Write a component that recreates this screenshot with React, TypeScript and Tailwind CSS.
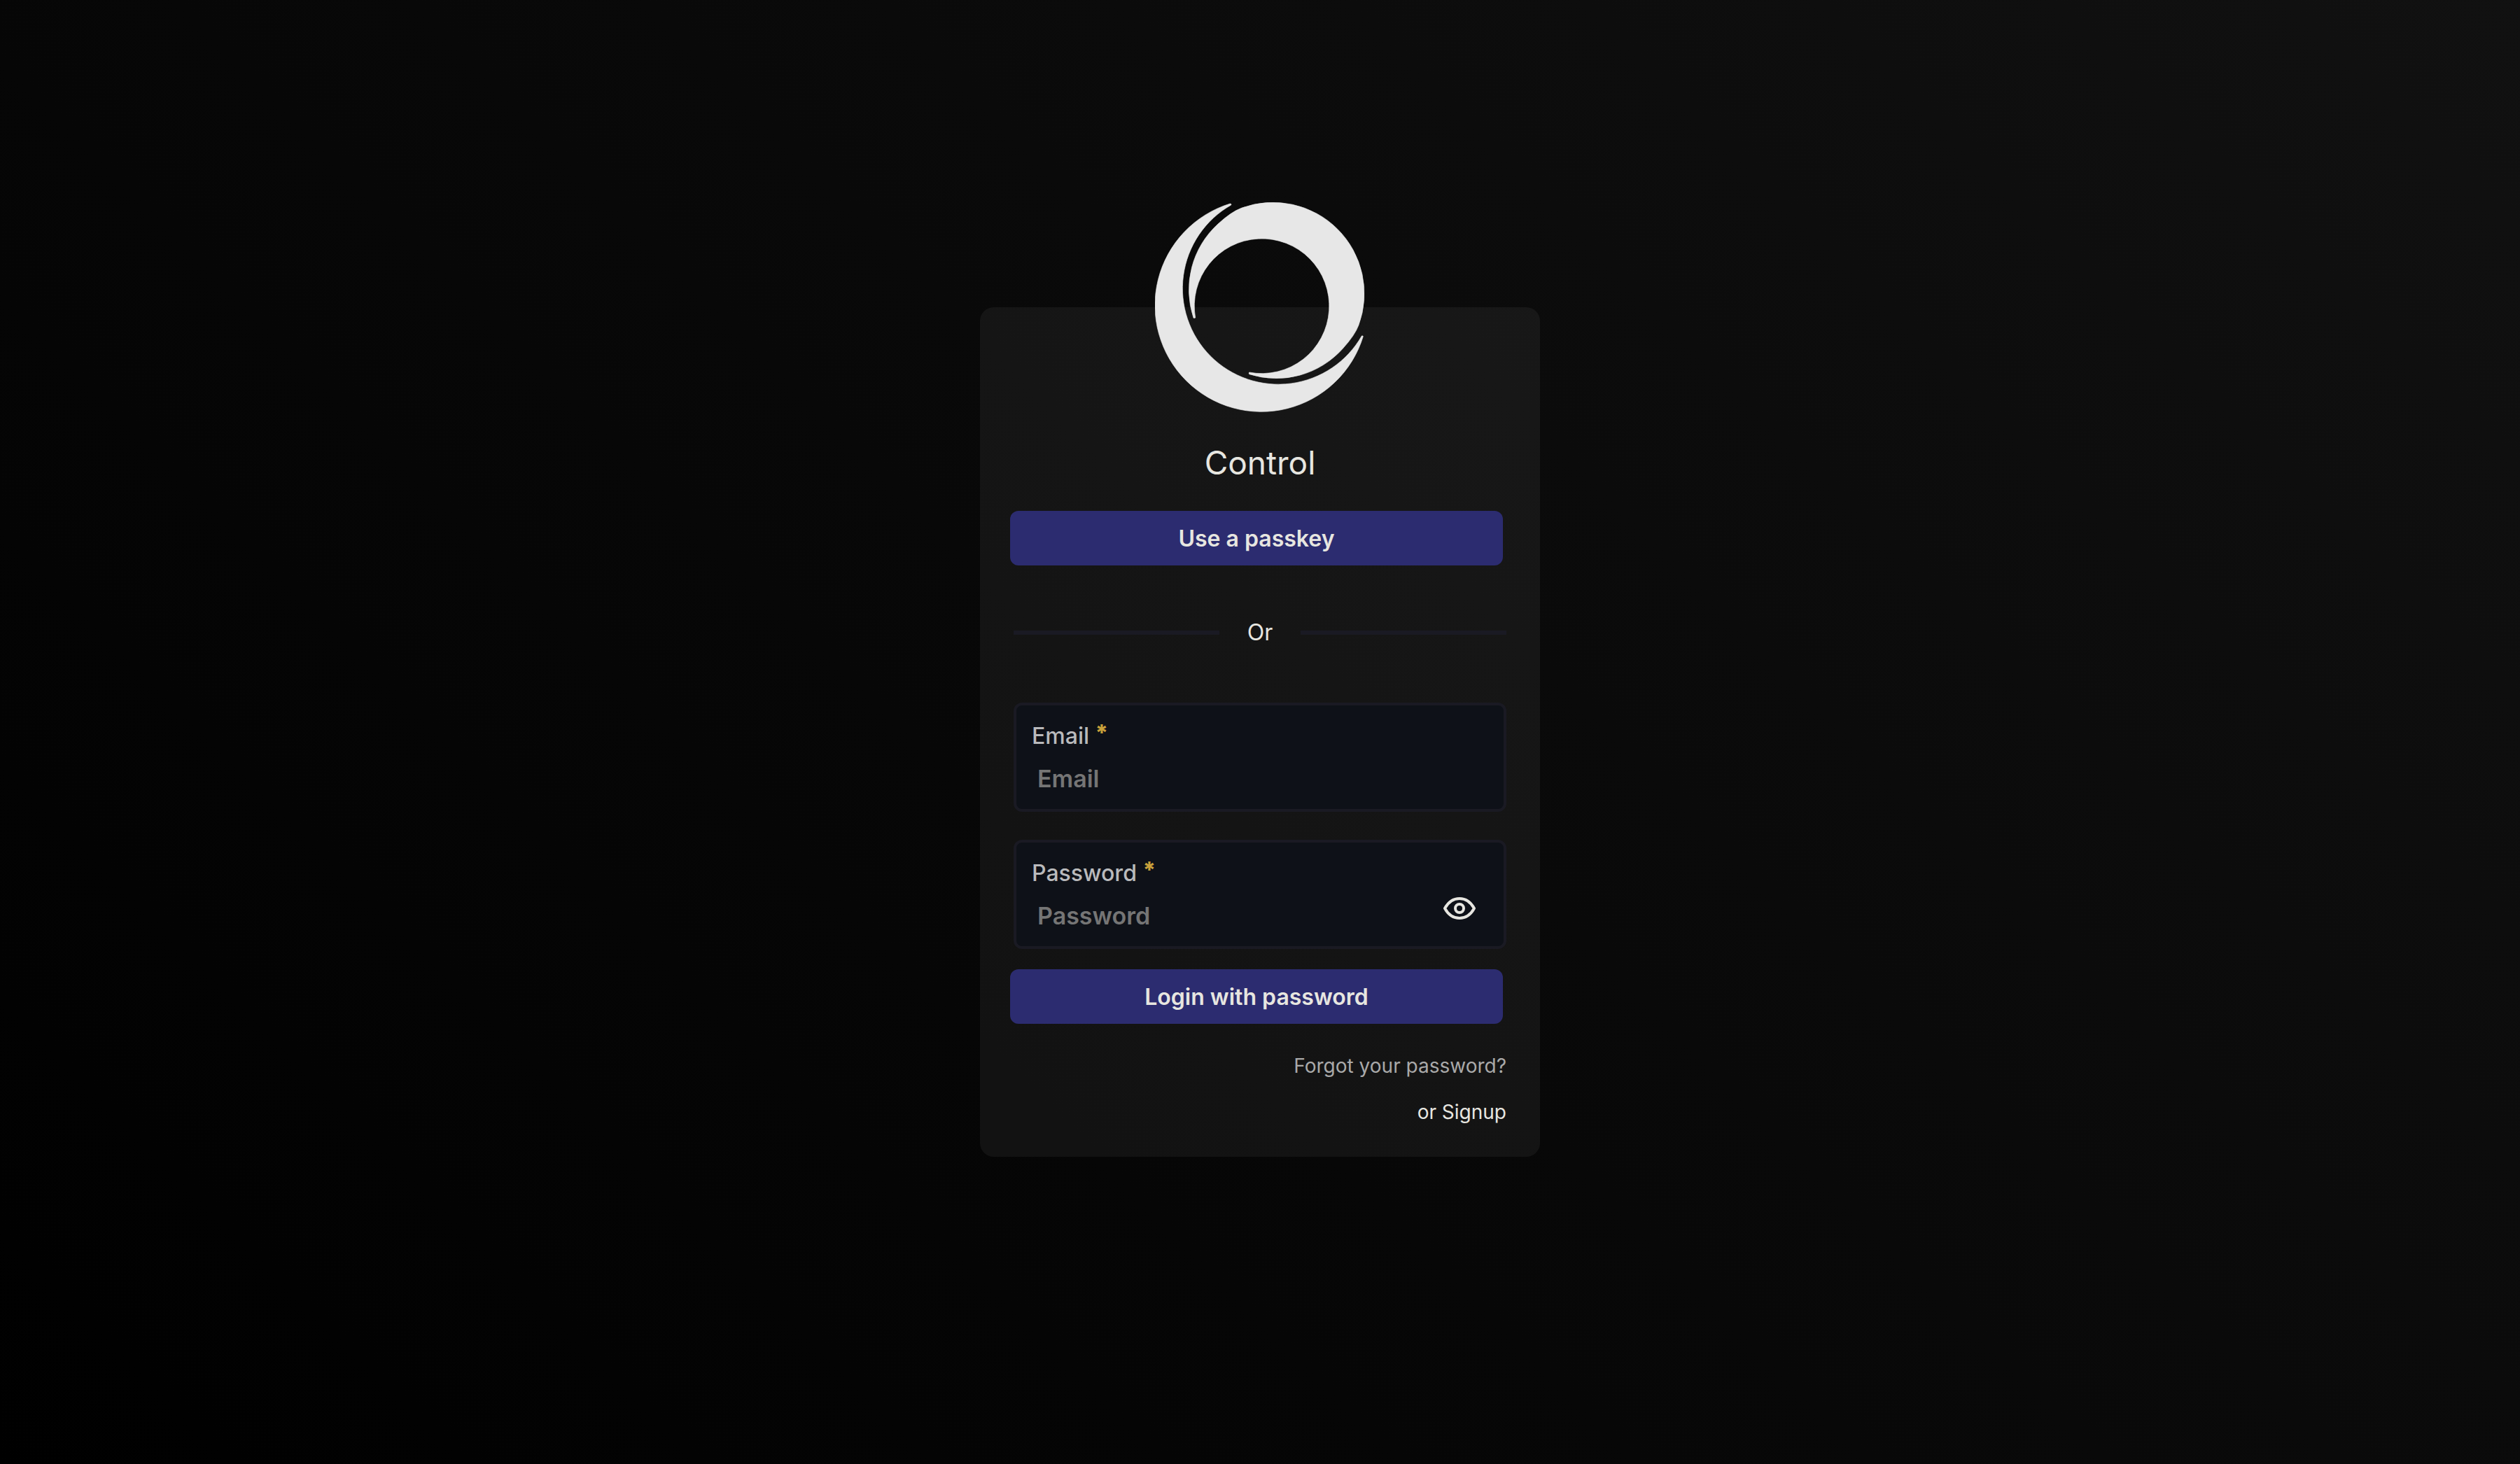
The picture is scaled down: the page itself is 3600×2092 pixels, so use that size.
import { useState } from "react";
import type { ReactNode } from "react";

function Logo() {
  return (
    <svg viewBox="30 55 900 900" className="size-[300px]" fill="#e7e7e7" stroke="#e7e7e7" strokeWidth="2" strokeLinejoin="round" role="img" aria-label="Control logo">
      <path d="M352 61A456 456 0 1 0 922 630Q920 626 916 628A411 411 0 1 1 356 67Q359 62 352 61Z" />
      <path d="M195 551A382 382 0 0 1 300 148Q357 96 400 80A391 391 0 0 1 902.5 582.5Q886.5 625.5 834.5 682.5A382 382 0 0 1 434 792Q431 787 434 784A289 289 0 1 0 203 550Q200 553 195 551Z" />
    </svg>
  );
}

function EyeIcon() {
  return (
    <svg viewBox="0 0 46 32" className="h-8 w-[46px]" fill="none" stroke="#e7e6e0" strokeWidth="4" strokeLinejoin="round" aria-hidden="true">
      <path d="M2 16C7 7 14 2 23 2C32 2 39 7 44 16C39 25 32 30 23 30C14 30 7 25 2 16Z" />
      <circle cx="23" cy="16" r="6" />
    </svg>
  );
}

function PrimaryButton({ children }: { children: string }) {
  return (
    <button type="button" className="-ml-[5px] mr-[5px] flex h-[78px] items-center justify-center rounded-xl bg-[#2c2c70] pt-0.5 text-[32px] leading-10 font-semibold text-[#e7e6e0]">
      {children}
    </button>
  );
}

function Field({ id, label, type, action }: { id: string; label: string; type: string; action?: ReactNode }) {
  return (
    <div className="flex h-[156px] items-center rounded-xl border-4 border-[#1a1a23] bg-[#0e1118] pl-[22px] pr-10">
      <div className="flex min-w-0 flex-1 flex-col gap-5">
        <label htmlFor={id} className="h-10 text-[32px] leading-10 font-medium text-[#b9babc]">
          {label} <span className="align-[4px] leading-none font-extrabold text-[#c9a13b]">*</span>
        </label>
        <input id={id} type={type} placeholder={label} required className="h-10 w-full bg-transparent pl-2 text-[34px] font-semibold text-[#e7e6e0] outline-none placeholder:text-[#757575]" />
      </div>
      {action}
    </div>
  );
}

export default function App() {
  const [visible, setVisible] = useState(false);
  return (
    <main className="flex min-h-screen items-center justify-center bg-linear-[45deg,#000000,#111111] font-['Inter',sans-serif] text-[#e7e6e0]">
      <form className="flex w-full max-w-[800px] flex-col rounded-[20px] bg-white/5 px-12 pb-11">
        <div className="-mt-[150px] flex justify-center">
          <Logo />
        </div>
        <h1 className="mt-[43px] mb-10 text-center text-[46px] leading-[58px]">Control</h1>
        <PrimaryButton>Use a passkey</PrimaryButton>
        <div className="mt-[74px] mb-[78px] flex h-11 items-center gap-10">
          <span className="h-[6px] flex-1 bg-[#1a1a23]" />
          <span className="text-[32px]">Or</span>
          <span className="h-[6px] flex-1 bg-[#1a1a23]" />
        </div>
        <div className="mb-[29px] flex flex-col gap-10">
          <Field id="email" label="Email" type="email" />
          <Field
            id="password"
            label="Password"
            type={visible ? "text" : "password"}
            action={
              <button type="button" aria-label="Show password" onClick={() => setVisible(!visible)} className="mt-10">
                <EyeIcon />
              </button>
            }
          />
        </div>
        <PrimaryButton>Login with password</PrimaryButton>
        <div className="mt-10 flex flex-col items-end gap-[26px] text-[28px] leading-10">
          <a href="#forgot" className="text-[#a9a9a9]">Forgot your password?</a>
          <a href="#signup">or Signup</a>
        </div>
      </form>
    </main>
  );
}
